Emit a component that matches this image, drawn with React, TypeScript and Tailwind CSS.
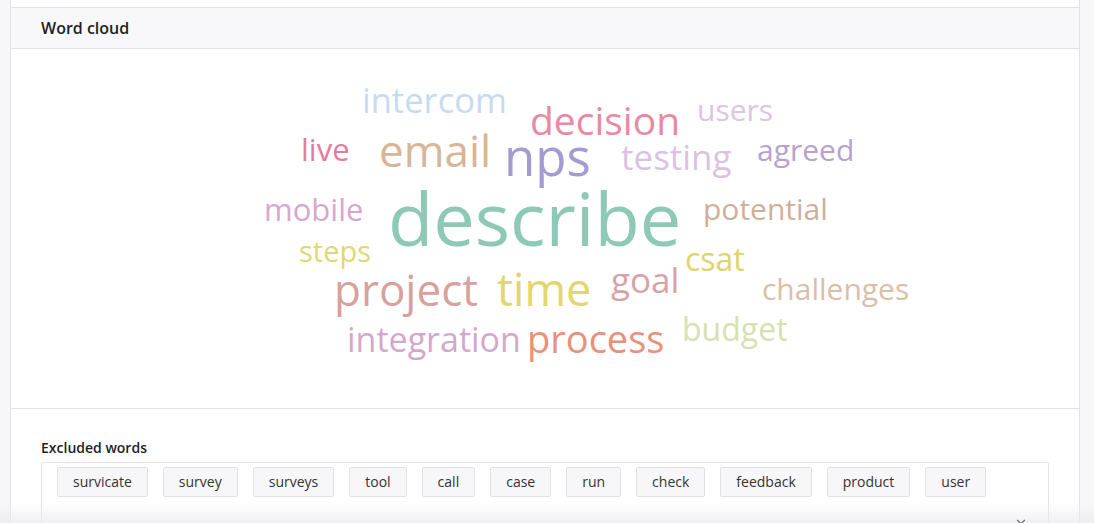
import { ChevronDown } from "lucide-react";

type Word = { text: string; left: number; top: number; size: number; color: string };

// positions measured against the card's content box (free canvas layout)
const words: Word[] = [
  { text: "intercom", left: 351, top: 34, size: 34.5, color: "text-[#c6dcee]" },
  { text: "decision", left: 519, top: 51, size: 39, color: "text-[#e68aa5]" },
  { text: "users", left: 686, top: 46, size: 30, color: "text-[#ddc4e2]" },
  { text: "live", left: 290, top: 85, size: 31, color: "text-[#e27d9b]" },
  { text: "email", left: 368, top: 79, size: 44, color: "text-[#d7b597]" },
  { text: "nps", left: 493, top: 82, size: 51, color: "text-[#a39bd1]" },
  { text: "testing", left: 610, top: 90, size: 35, color: "text-[#dbc2e3]" },
  { text: "agreed", left: 746, top: 86, size: 30, color: "text-[#b6a1d0]" },
  { text: "mobile", left: 253, top: 145, size: 31, color: "text-[#d8a7cf]" },
  { text: "describe", left: 377, top: 132, size: 74, color: "text-[#8ec9b7]" },
  { text: "potential", left: 692, top: 145, size: 30, color: "text-[#d0af99]" },
  { text: "steps", left: 288, top: 187, size: 29, color: "text-[#e3d674]" },
  { text: "csat", left: 674, top: 194, size: 32, color: "text-[#e1d46c]" },
  { text: "project", left: 323, top: 218, size: 44, color: "text-[#d9a19b]" },
  { text: "time", left: 486, top: 217, size: 45, color: "text-[#e3d66d]" },
  { text: "goal", left: 600, top: 213, size: 35, color: "text-[#d9a2a6]" },
  { text: "challenges", left: 751, top: 225, size: 30, color: "text-[#dcbea7]" },
  { text: "integration", left: 336, top: 273, size: 34, color: "text-[#d4a7cc]" },
  { text: "process", left: 516, top: 270, size: 38, color: "text-[#e8917b]" },
  { text: "budget", left: 671, top: 264, size: 32, color: "text-[#d7e1af]" },
];

const excluded = ["survicate", "survey", "surveys", "tool", "call", "case", "run", "check", "feedback", "product", "user"];

export default function App() {
  return (
    <div className="relative h-[523px] overflow-hidden bg-[#f7f6f9] pl-[10px] pr-[14px] font-['Open_Sans',sans-serif] text-[#222]">
      <div className="h-[7px] border-x border-[#e4e2e7] bg-white" />
      <div className="border border-[#e4e2e7] bg-white">
        {/* header */}
        <div className="flex h-[41px] items-center border-b border-[#e4e2e7] bg-[#f8f8fa] px-[30px]">
          <h2 className="text-[16px] font-semibold text-[#1f1f1f]">Word cloud</h2>
        </div>

        {/* cloud */}
        <div className="relative h-[360px] border-b border-[#e4e2e7]">
          {words.map((w) => (
            <span
              key={w.text}
              className={`absolute whitespace-nowrap leading-none ${w.color}`}
              style={{ left: w.left, top: w.top, fontSize: w.size }}
            >
              {w.text}
            </span>
          ))}
        </div>

        {/* excluded words */}
        <div className="px-[30px] pt-[29px] pb-10">
          <div className="mb-[4px] text-[14px] leading-[20px] font-semibold text-[#1f1f1f]">Excluded words</div>
          <div className="relative min-h-[90px] rounded-[2px] border border-[#e4e2e7] px-[15px] pt-[4px]">
            <div className="flex flex-wrap gap-[15px]">
              {excluded.map((t) => (
                <span
                  key={t}
                  className="rounded-[2px] border border-[#e2e2e6] bg-[#f7f7f9] px-[15px] py-[4px] text-[14px] leading-[20px] text-[#333]"
                >
                  {t}
                </span>
              ))}
            </div>
            <ChevronDown className="absolute right-[20px] top-[52px] z-10 h-[14px] w-[14px] text-[#666]" strokeWidth={2} />
          </div>
        </div>
      </div>

      {/* bottom fade */}
      <div className="pointer-events-none absolute inset-x-0 top-[503px] h-[20px] bg-gradient-to-b from-white/0 to-[#ecebef]/80" />
    </div>
  );
}
